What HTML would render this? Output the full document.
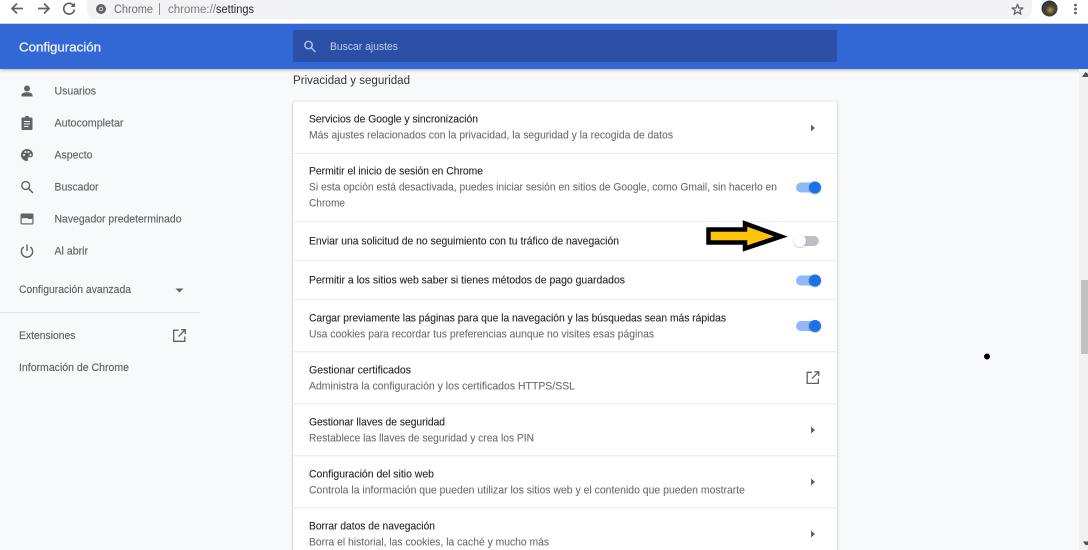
<!DOCTYPE html>
<html lang="es">
<head>
<meta charset="utf-8">
<title>Configuración</title>
<style>
html,body{margin:0;padding:0;width:1088px;height:550px;overflow:hidden;background:#f8f9fa;}
svg{position:absolute;left:0;top:0;display:block;}
text{font-family:"Liberation Sans",sans-serif;font-size:11px;filter:blur(.25px);}
.n{fill:#5f6368;stroke:#5f6368;stroke-width:.15;}
.t{fill:#26272a;stroke:#26272a;stroke-width:.12;}
.s{fill:#686b70;stroke:#686b70;stroke-width:.08;}
</style>
</head>
<body>
<svg width="1088" height="550" viewBox="0 0 1088 550" xmlns="http://www.w3.org/2000/svg">
<defs>
<filter id="sh" x="-5%" y="-5%" width="110%" height="110%"><feDropShadow dx="0" dy="0.5" stdDeviation="1.2" flood-color="#3c4043" flood-opacity="0.35"/></filter>
<filter id="hs" x="-2%" y="-20%" width="104%" height="150%"><feDropShadow dx="0" dy="1" stdDeviation="1.5" flood-color="#000" flood-opacity="0.3"/></filter>
<filter id="ks" x="-50%" y="-50%" width="200%" height="200%"><feDropShadow dx="0" dy="0.5" stdDeviation="0.8" flood-color="#000" flood-opacity="0.4"/></filter>
<radialGradient id="av" cx="55%" cy="60%" r="60%"><stop offset="0" stop-color="#b8924a"/><stop offset="0.45" stop-color="#4a4534"/><stop offset="1" stop-color="#2a3234"/></radialGradient>
</defs>

<rect width="1088" height="550" fill="#f8f9fa"/>

<!-- card -->
<rect x="293" y="101.500" width="544" height="460" rx="3" fill="#fff" filter="url(#sh)"/>
<g fill="#eeeff0">
<rect x="293" y="153" width="544" height="1"/>
<rect x="293" y="221" width="544" height="1"/>
<rect x="293" y="260" width="544" height="1"/>
<rect x="293" y="299" width="544" height="1"/>
<rect x="293" y="351" width="544" height="1.500"/>
<rect x="293" y="403" width="544" height="1.500"/>
<rect x="293" y="455" width="544" height="1.500"/>
<rect x="293" y="507" width="544" height="1.500"/>
</g>

<!-- header -->
<rect x="0" y="23" width="1088" height="46" fill="#3367d6" filter="url(#hs)"/>
<rect x="293" y="30" width="544" height="32" rx="1" fill="#2a4fa5"/>
<rect x="0" y="0" width="1088" height="23" fill="#fff"/>
<rect x="0" y="23" width="1088" height="1" fill="#cfd1d3"/>

<!-- omnibox -->
<path d="M87 0H1032V9.500A10 10 0 0 1 1022 19.500H97A10 10 0 0 1 87 9.500Z" fill="#f1f3f4"/>

<!-- toolbar icons -->
<g fill="none" stroke="#5f6368" stroke-width="1.700">
<path d="M23 8.500H12.500M17 3.500L12 8.500L17 13.500"/>
<path d="M38 8.500H48.500M44 3.500L49 8.500L44 13.500"/>
<path d="M73.500 5.500A5.400 5.400 0 1 0 74.500 9.500"/>
</g>
<path d="M70.500 7H75V2.500Z" fill="#5f6368"/>
<circle cx="101" cy="9" r="5" fill="#5f6368"/>
<circle cx="101" cy="9" r="2.100" fill="#f1f3f4"/>
<circle cx="101" cy="9" r="1.400" fill="#5f6368"/>
<rect x="159" y="3" width="1" height="12" fill="#8a8d91"/>
<path d="M1017.500 4.200L1019 8H1023L1019.800 10.400L1021 14.200L1017.500 12L1014 14.200L1015.200 10.400L1012 8H1016Z" fill="none" stroke="#5f6368" stroke-width="1.200" stroke-linejoin="round"/>
<circle cx="1049.500" cy="8.500" r="8" fill="url(#av)"/>
<g fill="#5f6368"><circle cx="1075.500" cy="5" r="1.400"/><circle cx="1075.500" cy="9" r="1.400"/><circle cx="1075.500" cy="13" r="1.400"/></g>

<text x="114" y="13" style="font-size:11.500px" fill="#6a6d71" textLength="39" lengthAdjust="spacingAndGlyphs">Chrome</text>
<text x="168" y="13" style="font-size:11.500px" fill="#7a7d81" textLength="48" lengthAdjust="spacingAndGlyphs">chrome://</text>
<text x="216" y="13" style="font-size:11.500px" fill="#25272a" textLength="38" lengthAdjust="spacingAndGlyphs">settings</text>

<!-- header text -->
<text x="19" y="51.500" style="font-size:13px" fill="#eef3fd" stroke="#eef3fd" stroke-width=".3" textLength="82" lengthAdjust="spacingAndGlyphs">Configuración</text>
<g fill="none" stroke="#b4c5ea" stroke-width="1.400"><circle cx="308.500" cy="45" r="3.700"/><path d="M311.200 47.800L315.500 52"/></g>
<text x="330" y="50" fill="#c0cff0" textLength="68" lengthAdjust="spacingAndGlyphs">Buscar ajustes</text>

<!-- sidebar -->
<g fill="#5f6368">
<circle cx="27" cy="88.500" r="3"/><path d="M21.500 96.500V95C21.500 93 25 92.300 27 92.300S32.500 93 32.500 95V96.500Z"/>
<path d="M22.500 117.500H25L25.500 116H28.500L29 117.500H31.500A1 1 0 0 1 32.500 118.500V129A1 1 0 0 1 31.500 130H22.500A1 1 0 0 1 21.500 129V118.500A1 1 0 0 1 22.500 117.500Z"/>
<path d="M27 149A6 6 0 0 0 27 161C28.200 161 28.500 160 28 159.300C27.300 158.300 28 157.300 29 157.300H30.500A2.500 2.500 0 0 0 33 154.800C33 151.500 30.300 149 27 149Z"/>
<rect x="20.500" y="213.500" width="13" height="11" rx="1.200"/>
</g>
<g fill="#fff"><rect x="24" y="121" width="6" height="1"/><rect x="24" y="123.500" width="6" height="1"/><rect x="24" y="126" width="4.500" height="1"/>
<circle cx="24" cy="155" r="1"/><circle cx="25.500" cy="152" r="1"/><circle cx="28.500" cy="152" r="1"/><circle cx="30.500" cy="155" r="1"/>
</g>
<rect x="21.700" y="217" width="10.600" height="6.300" fill="#f8f9fa"/>
<rect x="28" y="217" width="4.300" height="2" fill="#5f6368"/>
<rect x="21.700" y="217" width="6.300" height="1.200" fill="#5f6368"/>
<g fill="none" stroke="#5f6368" stroke-width="1.400">
<circle cx="25.700" cy="185.500" r="3.900"/><path d="M28.500 188.500L33 193"/>
<path d="M27 244.500V251"/><path d="M23.700 247A5.600 5.600 0 1 0 30.300 247"/>
</g>
<text x="54.500" y="94.500" class="n" textLength="41.500" lengthAdjust="spacingAndGlyphs">Usuarios</text>
<text x="54.500" y="126.500" class="n" textLength="69" lengthAdjust="spacingAndGlyphs">Autocompletar</text>
<text x="54.500" y="158.500" class="n" textLength="38" lengthAdjust="spacingAndGlyphs">Aspecto</text>
<text x="54.500" y="190.500" class="n" textLength="44" lengthAdjust="spacingAndGlyphs">Buscador</text>
<text x="54.500" y="222.500" class="n" textLength="127" lengthAdjust="spacingAndGlyphs">Navegador predeterminado</text>
<text x="54.500" y="254.500" class="n" textLength="33.500" lengthAdjust="spacingAndGlyphs">Al abrir</text>
<text x="19" y="293" class="n" textLength="112" lengthAdjust="spacingAndGlyphs">Configuración avanzada</text>
<path d="M175.500 288.500H183.500L179.500 292.500Z" fill="#5f6368"/>
<rect x="0" y="312" width="200" height="1" fill="#e3e4e6"/>
<text x="19" y="339" class="n" textLength="56.500" lengthAdjust="spacingAndGlyphs">Extensiones</text>
<g fill="none" stroke="#5f6368" stroke-width="1.300">
<path d="M178.500 330.200H173.700V341.300H184.800V336.500"/><path d="M181 329.700H185.300V334M185 330L178.500 336.500"/>
</g>
<text x="19" y="371" class="n" textLength="110" lengthAdjust="spacingAndGlyphs">Información de Chrome</text>

<!-- content -->
<text x="293" y="84" style="font-size:11.500px" fill="#34363a" textLength="117" lengthAdjust="spacingAndGlyphs">Privacidad y seguridad</text>

<text x="309" y="122.500" class="t" textLength="169" lengthAdjust="spacingAndGlyphs">Servicios de Google y sincronización</text>
<text x="309" y="138.500" class="s" textLength="364" lengthAdjust="spacingAndGlyphs">Más ajustes relacionados con la privacidad, la seguridad y la recogida de datos</text>
<text x="309" y="174.500" class="t" textLength="174" lengthAdjust="spacingAndGlyphs">Permitir el inicio de sesión en Chrome</text>
<text x="309" y="190.500" class="s" textLength="468" lengthAdjust="spacingAndGlyphs">Si esta opción está desactivada, puedes iniciar sesión en sitios de Google, como Gmail, sin hacerlo en</text>
<text x="309" y="206.500" class="s" textLength="36" lengthAdjust="spacingAndGlyphs">Chrome</text>
<text x="309" y="244.500" class="t" textLength="310" lengthAdjust="spacingAndGlyphs">Enviar una solicitud de no seguimiento con tu tráfico de navegación</text>
<text x="309" y="283.500" class="t" textLength="316" lengthAdjust="spacingAndGlyphs">Permitir a los sitios web saber si tienes métodos de pago guardados</text>
<text x="309" y="321.500" class="t" textLength="417" lengthAdjust="spacingAndGlyphs">Cargar previamente las páginas para que la navegación y las búsquedas sean más rápidas</text>
<text x="309" y="337.500" class="s" textLength="345" lengthAdjust="spacingAndGlyphs">Usa cookies para recordar tus preferencias aunque no visites esas páginas</text>
<text x="309" y="373.500" class="t" textLength="102" lengthAdjust="spacingAndGlyphs">Gestionar certificados</text>
<text x="309" y="389.500" class="s" textLength="266" lengthAdjust="spacingAndGlyphs">Administra la configuración y los certificados HTTPS/SSL</text>
<text x="309" y="425.500" class="t" textLength="136" lengthAdjust="spacingAndGlyphs">Gestionar llaves de seguridad</text>
<text x="309" y="441.500" class="s" textLength="225" lengthAdjust="spacingAndGlyphs">Restablece las llaves de seguridad y crea los PIN</text>
<text x="309" y="477.500" class="t" textLength="125" lengthAdjust="spacingAndGlyphs">Configuración del sitio web</text>
<text x="309" y="493.500" class="s" textLength="436" lengthAdjust="spacingAndGlyphs">Controla la información que pueden utilizar los sitios web y el contenido que pueden mostrarte</text>
<text x="309" y="529.500" class="t" textLength="126" lengthAdjust="spacingAndGlyphs">Borrar datos de navegación</text>
<text x="309" y="545.500" class="s" textLength="240" lengthAdjust="spacingAndGlyphs">Borra el historial, las cookies, la caché y mucho más</text>

<!-- arrows -->
<g fill="#5f6368">
<path d="M811 124.500L815 128L811 131.500Z"/>
<path d="M811 426.500L815 430L811 433.500Z"/>
<path d="M811 478.500L815 482L811 485.500Z"/>
<path d="M811 530.500L815 534L811 537.500Z"/>
</g>
<g fill="none" stroke="#5f6368" stroke-width="1.300">
<path d="M812 372.300H807.200V383.400H818.300V378.600"/><path d="M814.500 371.800H818.800V376.100M818.500 372.100L812 378.600"/>
</g>

<!-- toggles -->
<g>
<rect x="796" y="182.500" width="22" height="10" rx="5" fill="#8ab4f8" opacity=".95"/>
<circle cx="815" cy="187.500" r="6" fill="#1a73e8" filter="url(#ks)"/>
<rect x="796" y="275.500" width="22" height="10" rx="5" fill="#8ab4f8" opacity=".95"/>
<circle cx="815" cy="280.500" r="6" fill="#1a73e8" filter="url(#ks)"/>
<rect x="796" y="321" width="22" height="10" rx="5" fill="#8ab4f8" opacity=".95"/>
<circle cx="815" cy="326" r="6" fill="#1a73e8" filter="url(#ks)"/>
<rect x="797" y="236" width="22" height="10" rx="5" fill="#bdc1c6"/>
<circle cx="800" cy="241" r="6" fill="#fff" filter="url(#ks)"/>
</g>

<!-- yellow arrow -->
<path d="M708.500 229.500H745V223.500L781 236.500L745 248.500V242.500H708.500Z" fill="#ffc30b" stroke="#000" stroke-width="4.500" stroke-linejoin="miter"/>

<!-- dot -->
<circle cx="987" cy="356.500" r="3" fill="#000"/>

<!-- scrollbar -->
<rect x="1079" y="69" width="9" height="481" fill="#f1f1f1"/>
<rect x="1081" y="280" width="7" height="74" fill="#c1c1c1"/>
<path d="M1082 77H1088V74L1085.500 72Z" fill="#505050"/>
<path d="M1083 541.500H1088V545L1085.500 545Z" fill="#505050"/>
</svg>
</body>
</html>
